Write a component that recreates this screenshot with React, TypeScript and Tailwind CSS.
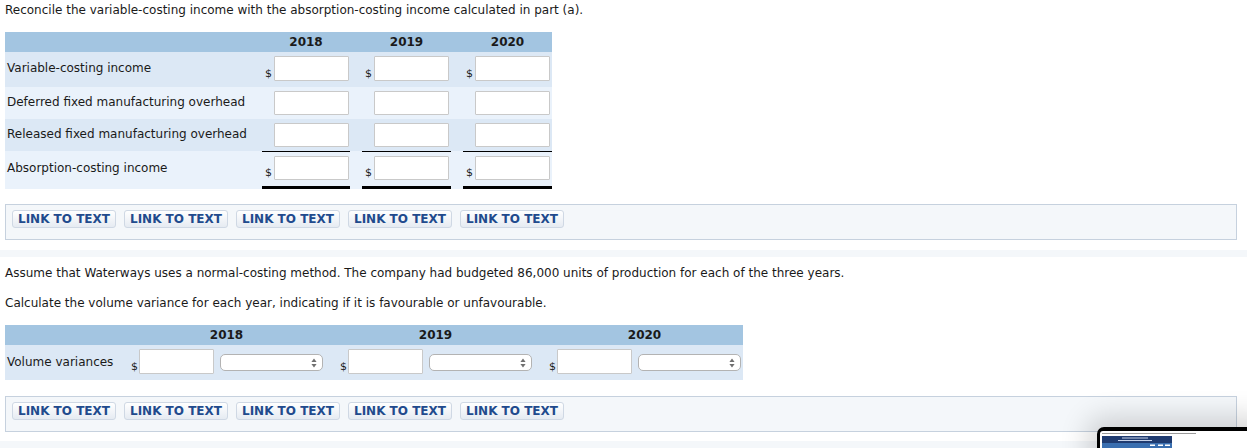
import React from "react";

const years = ["2018", "2019", "2020"];

function Box({ mt = "mt-[15px]" }: { mt?: string }) {
  return (
    <div className={`flex items-start ${mt} h-[36px] border border-[#c6d1de] bg-[#f4f7fa] pl-[6px] pt-[5px] gap-[8px]`}>
      {[0, 1, 2, 3, 4].map((i) => (
        <button
          key={i}
          className="w-[104px] h-[18px] border border-[#cfd8e4] rounded-[3px] bg-gradient-to-b from-[#ffffff] to-[#e6ebf2] text-[#214a8d] font-bold text-[12px] leading-[16px] whitespace-nowrap text-center"
        >
          LINK TO TEXT
        </button>
      ))}
    </div>
  );
}

function Input({ h = "h-[24px]" }: { h?: string }) {
  return (
    <input
      type="text"
      className={`w-[75px] ${h} border border-[#c9c9c9] rounded-[1px] bg-white outline-none`}
    />
  );
}

function Arrows() {
  return (
    <svg width="6" height="10" viewBox="0 0 6 10">
      <path d="M3 0.5 L5.6 4 H0.4Z M0.4 6 H5.6 L3 9.5Z" fill="#707070" />
    </svg>
  );
}

const rows1 = [
  { label: "Variable-costing income", dollar: true, bg: "bg-[#dce8f5]", pad: "pt-[4px] pb-[6px]", lpad: "pb-[3px]", ih: "h-[25px]", total: false },
  { label: "Deferred fixed manufacturing overhead", dollar: false, bg: "bg-[#eaf2fb]", pad: "pt-[4px] pb-[4px]", lpad: "pb-[2px]", ih: "h-[24px]", total: false },
  { label: "Released fixed manufacturing overhead", dollar: false, bg: "bg-[#dce8f5]", pad: "pt-[4px] pb-[4px]", lpad: "pb-[2px]", ih: "h-[24px]", total: false },
  { label: "Absorption-costing income", dollar: true, bg: "bg-[#eaf2fb]", pad: "pt-[4px] pb-[6px]", lpad: "pb-[4px]", ih: "h-[24px]", total: true },
];

const cellW = ["w-[100px]", "w-[101px]", "w-[101px]"];

export default function App() {
  return (
    <div className="relative w-[1247px] h-[448px] overflow-hidden bg-white text-[12px] leading-[15px] text-[#1a1a1a] font-['DejaVu_Sans',sans-serif]">
      <div className="pl-[5px] pr-[10px] pt-[3px]">
        <p>Reconcile the variable-costing income with the absorption-costing income calculated in part (a).</p>

        <div className="mt-[14px] w-[547px]">
          <div className="flex h-[20px] bg-[#a3c5e1] font-bold items-center">
            <div className="w-[245px]" />
            {years.map((y, i) => (
              <div key={y} className={`${cellW[i]} pl-[12px] text-center`}>
                {y}
              </div>
            ))}
          </div>
          {rows1.map((r) => (
            <div key={r.label} className={`flex items-stretch ${r.bg}`}>
              <div className={`w-[245px] pl-[2px] flex items-center ${r.lpad}`}>{r.label}</div>
              {years.map((y, i) => (
                <div key={y} className={`${cellW[i]} pl-[12px]`}>
                  <div
                    className={`flex items-end pl-[3px] ${r.pad} ${
                      r.total ? "border-t border-black border-b-[3px]" : ""
                    }`}
                  >
                    <span className="w-[9px] text-[11px] leading-[12px] mb-[1px]">{r.dollar ? "$" : ""}</span>
                    <Input h={r.ih} />
                  </div>
                </div>
              ))}
            </div>
          ))}
        </div>

        <Box />
      </div>

      <div className="mt-[10px] h-[7px] bg-[#f4f7fa]" />

      <div className="pl-[5px] pr-[10px]">
        <p className="mt-[9px]">
          Assume that Waterways uses a normal-costing method. The company had budgeted 86,000 units of production for each of the three years.
        </p>
        <p className="mt-[15px]">
          Calculate the volume variance for each year, indicating if it is favourable or unfavourable.
        </p>

        <div className="mt-[14px] w-[738px]">
          <div className="flex h-[20px] bg-[#a3c5e1] font-bold items-center">
            <div className="w-[111px]" />
            {years.map((y) => (
              <div key={y} className="w-[209px] pl-[15px] pr-[3px] text-center">
                {y}
              </div>
            ))}
          </div>
          <div className="flex items-stretch bg-[#dce8f5]">
            <div className="w-[111px] pl-[2px] pb-[1px] flex items-center">Volume variances</div>
            {years.map((y) => (
              <div key={y} className="w-[209px] pl-[15px] pt-[4px] pb-[6px] flex items-end">
                <span className="w-[8px] text-[11px] leading-[12px] mb-[1px]">$</span>
                <Input h="h-[25px]" />
                <div className="ml-[6px] mb-[3px] w-[103px] h-[17px] rounded-[5px] border border-[#b3b3b3] bg-white flex items-center justify-end pr-[5px]">
                  <Arrows />
                </div>
              </div>
            ))}
          </div>
        </div>

        <Box mt="mt-[16px]" />
      </div>

      <div className="mt-[9px] h-[10px] bg-[#f4f7fa]" />

      <div className="absolute left-[1097px] top-[427px] w-[170px] h-[40px] rounded-[7px] bg-black pt-[4px] pl-[3px] shadow-[0_0_28px_10px_rgba(0,0,0,0.16)]">
        <div className="w-full h-full bg-white rounded-tl-[3px]">
          <svg width="167" height="36" viewBox="0 0 167 36">
            <rect x="2" y="2" width="94" height="1" fill="#9a9a9a" />
            <rect x="2" y="5" width="70" height="12" fill="#1f3b70" />
            <rect x="22" y="6.5" width="26" height="1" fill="#c8d3e8" />
            <rect x="18" y="9" width="34" height="1" fill="#c8d3e8" />
            <rect x="2" y="12" width="70" height="5" fill="#3a6fb0" />
            <rect x="50" y="13.5" width="5" height="1.5" fill="#ffffff" />
            <rect x="58" y="13.5" width="5" height="1.5" fill="#ffffff" />
            <rect x="65" y="13.5" width="5" height="1.5" fill="#ffffff" />
          </svg>
        </div>
      </div>
    </div>
  );
}
